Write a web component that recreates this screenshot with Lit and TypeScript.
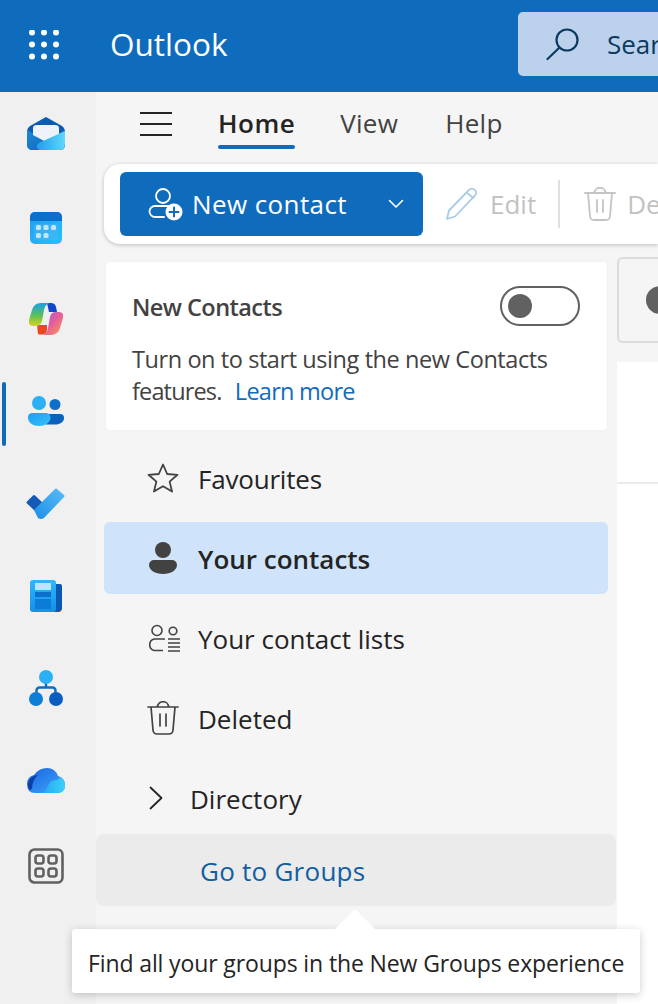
import { LitElement, html, css, svg } from "lit";
import { customElement } from "lit/decorators.js";

const stroke = (c: string, w = 2) => `fill:none;stroke:${c};stroke-width:${w};stroke-linecap:round;stroke-linejoin:round`;

const icons = {
  waffle: html`<svg width="32" height="32" viewBox="0 0 32 32" fill="#fff">${[2.5, 14.5, 26.5].flatMap((y) => [3, 15, 27].map((x) => svg`<circle cx=${x} cy=${y} r="3"/>`))}</svg>`,
  mail: html`<svg width="38" height="34" viewBox="0 0 38 34"><defs><linearGradient id="m1" x1="0" y1="0" x2="1" y2="1"><stop offset="0" stop-color="#1b8ad8"/><stop offset="1" stop-color="#0f62b5"/></linearGradient><linearGradient id="m2" x1="0" y1="0" x2="1" y2="0"><stop offset="0" stop-color="#1f9fe8"/><stop offset="1" stop-color="#60d8fb"/></linearGradient></defs>
    <path d="M19 0 L35 9 Q38 11 38 14 V27 Q38 33 32 33 H6 Q0 33 0 27 V14 Q0 11 3 9Z" fill="#0b5cb0"/>
    <path d="M0 13 L19 23 L38 13 V27 Q38 33 32 33 H6 Q0 33 0 27Z" fill="url(#m1)"/>
    <path d="M6 11 Q6 8 10 8 H28 Q32 8 32 11 V18 L19 25 L6 18Z" fill="#eef3fb"/>
    <path d="M10 28 Q11 26 14 25 L38 14 V27 Q38 33 32 33 H14 Q9 33 10 28Z" fill="url(#m2)"/></svg>`,
  calendar: html`<svg width="32" height="32" viewBox="0 0 32 32"><defs><linearGradient id="c1" x1="0" y1="0" x2="1" y2="1"><stop offset="0" stop-color="#1d9df0"/><stop offset="1" stop-color="#27c1fb"/></linearGradient></defs>
    <rect width="32" height="32" rx="5" fill="url(#c1)"/><path d="M0 9V5a5 5 0 0 1 5-5h22a5 5 0 0 1 5 5v4Z" fill="#0c6fc9"/><rect x="4" y="12" width="24" height="16" rx="2" fill="#4fb3f3" opacity=".5"/>
    <g fill="#bfe6fd"><rect x="6" y="13" width="5" height="5" rx="1.5"/><rect x="13.5" y="13" width="5" height="5" rx="1.5"/><rect x="21" y="13" width="5" height="5" rx="1.5"/><rect x="6" y="21" width="5" height="5" rx="1.5"/><rect x="13.5" y="21" width="5" height="5" rx="1.5"/></g></svg>`,
  copilot: html`<svg width="34" height="32" viewBox="0 0 34 32"><defs><linearGradient id="p1" x1="0" y1="0" x2="0" y2="1"><stop offset="0" stop-color="#17a2ea"/><stop offset=".55" stop-color="#5bc05a"/><stop offset="1" stop-color="#e6cf18"/></linearGradient><linearGradient id="p2" x1="0" y1="0" x2="1" y2="1"><stop offset="0" stop-color="#a45ce0"/><stop offset=".5" stop-color="#e45f9a"/><stop offset="1" stop-color="#fda04c"/></linearGradient></defs>
    <path d="M18 0 H22 Q26 0 27 4 L28 9 H20Z" fill="#1246c8"/><path d="M9 31 Q12 32 15 31 Q18 30 18 26 L18 22 H8 Z" fill="#e9481f"/>
    <path d="M12 0 H21 Q16 1 15 7 L13 18 Q12 23 7 23 H4 Q-1 23 0 17 L3 7 Q5 0 12 0Z" fill="url(#p1)"/>
    <path d="M22 32 H13 Q18 31 19 25 L21 14 Q22 9 27 9 H30 Q35 9 34 15 L31 25 Q29 32 22 32Z" fill="url(#p2)"/></svg>`,
  people: html`<svg width="36" height="30" viewBox="0 0 36 30"><defs><linearGradient id="u1" x1="0" y1="0" x2="1" y2="1"><stop offset="0" stop-color="#1b9fee"/><stop offset="1" stop-color="#37c0fb"/></linearGradient></defs>
    <circle cx="27" cy="8.500" r="5.500" fill="#0c6fc9"/><path d="M18 18h14a4 4 0 0 1 4 4c0 4-4 6.500-9 6.500h-9Z" fill="#0a62bb"/>
    <circle cx="11" cy="7" r="7" fill="#2bb0f5"/><path d="M4 17h14a4.500 4.500 0 0 1 4.500 4.500C22.500 26.500 17 30 11 30S0 26.500 0 21.500A4.500 4.500 0 0 1 4 17Z" fill="url(#u1)"/></svg>`,
  todo: html`<svg width="40" height="32" viewBox="0 0 40 32"><defs><linearGradient id="t1" x1="0" y1="1" x2="1" y2="0"><stop offset="0" stop-color="#1c8fe6"/><stop offset="1" stop-color="#57bdf5"/></linearGradient></defs>
    <path d="M1 13.500 L7 7.500 Q8 6.500 9 7.500 L17 15 L9 23 L1 15.500 Q0 14.500 1 13.500Z" fill="#1558b5"/><path d="M8 22 L29 1 Q30 0 31 1 L38 7 Q39 8 38 9 L18 30 Q15 32 12 30Z" fill="url(#t1)"/></svg>`,
  news: html`<svg width="32" height="32" viewBox="0 0 32 32"><defs><linearGradient id="n1" x1="0" y1="0" x2="0" y2="1"><stop offset="0" stop-color="#2fb7fb"/><stop offset="1" stop-color="#1390e8"/></linearGradient></defs>
    <path d="M24 4h6a2 2 0 0 1 2 2V28a4 4 0 0 1-4 4H24Z" fill="#0b58b2"/><rect width="26" height="32" rx="3" fill="url(#n1)"/>
    <rect x="5" y="3" width="16" height="7" fill="#b8e6fd"/><rect x="5" y="12" width="16" height="5" fill="#0c6fc9"/><rect x="5" y="19" width="16" height="10" fill="#0c7cd8"/></svg>`,
  org: html`<svg width="34" height="36" viewBox="0 0 34 36"><path d="M17 12v5M7.500 24v-3.500a3 3 0 0 1 3-3h13a3 3 0 0 1 3 3V24" style=${stroke("#0f6cbd", 2.4)}/><circle cx="17" cy="7" r="7" fill="#2bb0f5"/><circle cx="7" cy="29" r="7" fill="#0f7fd6"/><circle cx="27" cy="29" r="7" fill="#0b5ec0"/></svg>`,
  cloud: html`<svg width="38" height="26" viewBox="0 0 38 26"><defs><linearGradient id="o1" x1="0" y1="0" x2="1" y2="1"><stop offset="0" stop-color="#1a63e0"/><stop offset="1" stop-color="#3fa8fb"/></linearGradient><linearGradient id="o2" x1="0" y1="0" x2="1" y2="0"><stop offset="0" stop-color="#25a7f5"/><stop offset="1" stop-color="#3ed0f7"/></linearGradient></defs>
    <path d="M8 25 Q0 25 0 16 Q0 9 7 7 Q12 0 20 0 Q28 0 31 8 Q38 10 38 17 Q38 25 30 25Z" fill="url(#o1)"/>
    <path d="M2 22 Q-1 14 5 9 Q8 7 11 7 Q5 12 5 21Z" fill="#0d3fa8"/><path d="M15 25 Q19 23 21 18 Q23 12 29 12 Q32 12 33 9 Q38 12 38 18 Q38 25 30 25Z" fill="url(#o2)"/></svg>`,
  apps: html`<svg width="36" height="36" viewBox="0 0 36 36" style=${stroke("#616161", 2.6)}><rect x="1.500" y="1.500" width="33" height="33" rx="5"/><rect x="7.500" y="7.500" width="8" height="8" rx="2.500"/><rect x="20.500" y="7.500" width="8" height="8" rx="2.500"/><rect x="7.500" y="20.500" width="8" height="8" rx="2.500"/><rect x="20.500" y="20.500" width="8" height="8" rx="2.500"/></svg>`,
  menu: html`<svg width="32" height="24" viewBox="0 0 32 24" style=${stroke("#242424", 2)}><path d="M0 1h32M0 12h32M0 23h32" style="stroke-linecap:butt"/></svg>`,
  search: html`<svg width="34" height="34" viewBox="0 0 34 34" style=${stroke("#0b3a5e", 2.2)}><circle cx="21" cy="13" r="10.500"/><path d="M13.500 20.500 1.500 32"/></svg>`,
  newContact: html`<svg width="36" height="34" viewBox="0 0 36 34"><g style=${stroke("#fff", 1.8)}><circle cx="15" cy="9" r="7"/><path d="M16 30H7a6 6 0 0 1-5.500-5.500A5.500 5.500 0 0 1 7 19h14"/></g><circle cx="26" cy="25" r="8.500" fill="#fff"/><path d="M26 20.500v9M21.500 25h9" style=${stroke("#0f6cbd", 2)}/></svg>`,
  chevDown: html`<svg width="16" height="10" viewBox="0 0 16 10" style=${stroke("#fff", 1.6)}><path d="M1.500 1.500 8 8l6.500-6.500"/></svg>`,
  pencil: html`<svg width="34" height="34" viewBox="0 0 34 34" style=${stroke("#a9cbe9", 1.8)}><path d="M24 2.800a4 4 0 0 1 5.800 0 4 4 0 0 1 0 5.800L10 29.500l-8 2.500 2-8.500Z"/><path d="M21.500 5.500l7 5.500"/></svg>`,
  trashOff: html`<svg width="32" height="34" viewBox="0 0 32 34" style=${stroke("#c4c4c4", 1.8)}><path d="M1 6h30M10.500 6c0-7 11-7 11 0M4 6l2 23a4 4 0 0 0 4 4h12a4 4 0 0 0 4-4l2-23M13 13v12M19 13v12"/></svg>`,
  star: html`<svg width="32" height="30" viewBox="0 0 32 30" style=${stroke("#424242", 1.8)}><path d="M16 1.500 20.200 11l10.300.8-7.900 6.800 2.500 10L16 23.200 6.900 28.600l2.500-10L1.500 11.800l10.300-.8Z"/></svg>`,
  person: html`<svg width="28" height="32" viewBox="0 0 28 32" fill="#424242"><circle cx="14" cy="8" r="8"/><path d="M5 18h18a5 5 0 0 1 5 5c0 5-6 9-14 9S0 28 0 23a5 5 0 0 1 5-5Z"/></svg>`,
  lists: html`<svg width="34" height="28" viewBox="0 0 34 28" style=${stroke("#424242", 1.6)}><circle cx="10" cy="6.500" r="5"/><circle cx="26" cy="7" r="3.800"/><path d="M16 26.500H7a6 6 0 0 1 0-11.500h11M21 15h12M21 19h12M21 23h12M21 27h12" style="stroke-linecap:butt"/></svg>`,
  trash: html`<svg width="32" height="34" viewBox="0 0 32 34" style=${stroke("#424242", 1.7)}><path d="M1 6h30M10.500 6c0-7 11-7 11 0M4 6l2 23a4 4 0 0 0 4 4h12a4 4 0 0 0 4-4l2-23M13 13v12M19 13v12"/></svg>`,
  chevRight: html`<svg width="14" height="24" viewBox="0 0 14 24" style=${stroke("#242424", 1.8)}><path d="M1.500 1.500 12.500 12 1.500 22.500"/></svg>`,
};

@customElement("app-root")
export class AppRoot extends LitElement {
  static styles = css`
    :host { display: block; position: relative; width: 658px; height: 1004px; overflow: hidden; background: #fff; font-family: "Open Sans", "Noto Sans", sans-serif; color: #242424; }
    svg { flex: none; display: block; }
    .top { height: 92px; background: #0f6cbd; display: flex; align-items: center; padding-left: 29px; }
    .brand { flex: none; color: #fff; font-size: 31.5px; font-weight: 500; margin: -5px 0 0 49px; width: 408px; }
    .search { flex: none; width: 300px; height: 64px; margin-top: -4px; border-radius: 5px; background: #bcd2ec; display: flex; align-items: center; gap: 27px; padding-left: 28px; color: #0b3a5e; font-size: 26px; }
    .body { display: flex; height: 912px; }
    .rail { flex: none; width: 96px; padding-right: 4px; background: #f0f0f0; box-sizing: border-box; display: flex; flex-direction: column; gap: 8.400px; position: relative; }
    .rail-slot { height: 84px; flex: none; box-sizing: border-box; display: flex; align-items: center; justify-content: center; }
    .rail-slot:nth-child(2) { padding-top: 4px; }
    .rail-slot:nth-child(9) { margin-top: -7px; }
    .rail-bar { position: absolute; left: 2px; top: 290px; width: 4px; height: 64px; border-radius: 2px; background: #0f6cbd; }
    .main { flex: 1; min-width: 0; background: #f5f5f5; display: flex; flex-direction: column; }
    .tabs { height: 72px; flex: none; display: flex; align-items: center; padding-left: 44px; font-size: 26px; color: #424242; box-sizing: border-box; letter-spacing: .3px; }
    .menu { display: flex; margin-right: 46px; margin-bottom: 8px; }
    .tab { margin-right: 47px; padding: 0 0 9px; margin-top: -1px; position: relative; }
    .tab.on { font-weight: 600; color: #242424; letter-spacing: .5px; margin-right: 45px; }
    .tab.on::after { content: ""; position: absolute; left: 0; right: 0; bottom: 1px; height: 4px; border-radius: 2px; background: #0f6cbd; }
    .toolbar { flex: none; margin-left: 8px; height: 80px; border-radius: 16px 0 0 16px; background: #fff; box-shadow: 0 1px 4px rgba(0,0,0,.22); display: flex; align-items: center; padding-left: 16px; white-space: nowrap; overflow: hidden; }
    .new { flex: none; width: 303px; height: 64px; box-sizing: border-box; border-radius: 6px; background: #0f6cbd; color: #fff; display: flex; align-items: center; padding-left: 28px; font-size: 26px; letter-spacing: .4px; }
    .new span { margin-left: 8px; flex: 1; }
    .new svg:last-child { margin-right: 19px; }
    .tool { flex: none; display: flex; align-items: center; gap: 11px; font-size: 26px; color: #c2c2c2; }
    .tool.edit { margin-left: 22px; }
    .sep { flex: none; width: 2px; height: 48px; background: #e0e0e0; margin: 0 24px 0 22px; }
    .content { flex: 1; min-height: 0; display: flex; padding-top: 13px; }
    .side { flex: none; width: 521px; position: relative; padding-top: 5px; }
    .card { margin-left: 10px; width: 501px; height: 168px; box-sizing: border-box; background: #fff; border-radius: 3px; padding: 28px 26px 0; box-shadow: 0 0 1px rgba(0,0,0,.12); }
    .card-head { display: flex; justify-content: space-between; align-items: center; height: 34px; font-size: 23.5px; font-weight: 600; color: #424242; letter-spacing: -.55px; }
    .switch { width: 80px; height: 40px; box-sizing: border-box; border: 2px solid #616161; border-radius: 20px; background: #fff; display: flex; align-items: center; padding-left: 6px; margin: -2px 1px 0 0; }
    .switch i { display: block; width: 24px; height: 24px; border-radius: 50%; background: #616161; }
    .card p { margin: 19px 0 0; font-size: 23.5px; line-height: 32px; color: #424242; letter-spacing: -.42px; }
    .tight { letter-spacing: -.85px; }
    .link { color: #0f6cbd; letter-spacing: -.75px; margin-left: 2px; }
    .nav { margin-top: 12px; display: flex; flex-direction: column; }
    .item { height: 72px; margin-left: 8px; width: 504px; margin-bottom: 8px; box-sizing: border-box; display: flex; align-items: center; padding-left: 43px; font-size: 26px; border-radius: 6px; }
    .item .ic { width: 51px; flex: none; display: flex; }
    .t { margin-top: 2px; }
    .item.on { background: #cfe4fa; font-weight: 600; }
    .fav { letter-spacing: -.2px; }
    .go { height: 72px; width: 520px; margin-top: -8px; border-radius: 8px; background: #ebebeb; box-sizing: border-box; padding-left: 104px; display: flex; align-items: center; font-size: 26px; letter-spacing: .25px; color: #115ea3; }
    .pane { flex: 1; min-width: 0; background: #fff; display: flex; flex-direction: column; margin-top: -13px; padding-top: 13px; background-clip: content-box; }
    .pane-top { background: #f5f5f5; height: 105px; box-sizing: border-box; padding: 0 0 19px 0; }
    .filter { height: 86px; border: 2px solid #dcdcdc; border-right: 0; border-radius: 6px 0 0 6px; box-sizing: border-box; display: flex; align-items: center; padding-left: 27px; }
    .filter i { flex: none; width: 28px; height: 28px; border-radius: 50%; background: #616161; }
    .head { height: 122px; border-bottom: 2px solid #ebebeb; box-sizing: border-box; }
    .tip { position: absolute; left: 72px; top: 929px; width: 568px; height: 64px; box-sizing: border-box; background: #fff; border-radius: 3px; box-shadow: 0 2px 8px rgba(0,0,0,.2); display: flex; align-items: center; padding: 3px 0 0 16px; font-size: 23px; letter-spacing: -.12px; color: #242424; white-space: nowrap; }
    .tip::before { content: ""; position: absolute; left: 263px; top: -20px; width: 0; height: 0; border: 20px solid transparent; border-top: 0; border-bottom-color: #fff; }
  `;

  render() {
    const rail = [icons.mail, icons.calendar, icons.copilot, icons.people, icons.todo, icons.news, icons.org, icons.cloud, icons.apps];
    return html`
      <div class="top">
        ${icons.waffle}
        <div class="brand">Outlook</div>
        <div class="search">${icons.search}<span>Search</span></div>
      </div>
      <div class="body">
        <div class="rail">
          ${rail.map((i) => html`<div class="rail-slot">${i}</div>`)}
          <div class="rail-bar"></div>
        </div>
        <div class="main">
          <div class="tabs">
            <div class="menu">${icons.menu}</div>
            <div class="tab on">Home</div>
            <div class="tab">View</div>
            <div class="tab">Help</div>
          </div>
          <div class="toolbar">
            <div class="new">${icons.newContact}<span>New contact</span>${icons.chevDown}</div>
            <div class="tool edit">${icons.pencil}<span>Edit</span></div>
            <div class="sep"></div>
            <div class="tool">${icons.trashOff}<span>Delete</span></div>
          </div>
          <div class="content">
            <div class="side">
              <div class="card">
                <div class="card-head"><span>New Contacts</span><div class="switch"><i></i></div></div>
                <p>Turn on to start using the new Contacts <span class="tight">features.</span>&nbsp; <span class="link">Learn more</span></p>
              </div>
              <div class="nav">
                <div class="item"><span class="ic">${icons.star}</span><span class="t fav">Favourites</span></div>
                <div class="item on"><span class="ic" style="padding-left:2px;width:49px">${icons.person}</span><span class="t">Your contacts</span></div>
                <div class="item"><span class="ic">${icons.lists}</span><span class="t">Your contact lists</span></div>
                <div class="item"><span class="ic">${icons.trash}</span><span class="t">Deleted</span></div>
                <div class="item"><span class="ic" style="padding-left:2px;width:41px">${icons.chevRight}</span><span class="t">Directory</span></div>
                <div class="go"><span class="t">Go to Groups</span></div>
              </div>
            </div>
            <div class="pane">
              <div class="pane-top"><div class="filter"><i></i></div></div>
              <div class="head"></div>
            </div>
          </div>
        </div>
      </div>
      <div class="tip">Find all your groups in the New Groups experience</div>
    `;
  }
}
